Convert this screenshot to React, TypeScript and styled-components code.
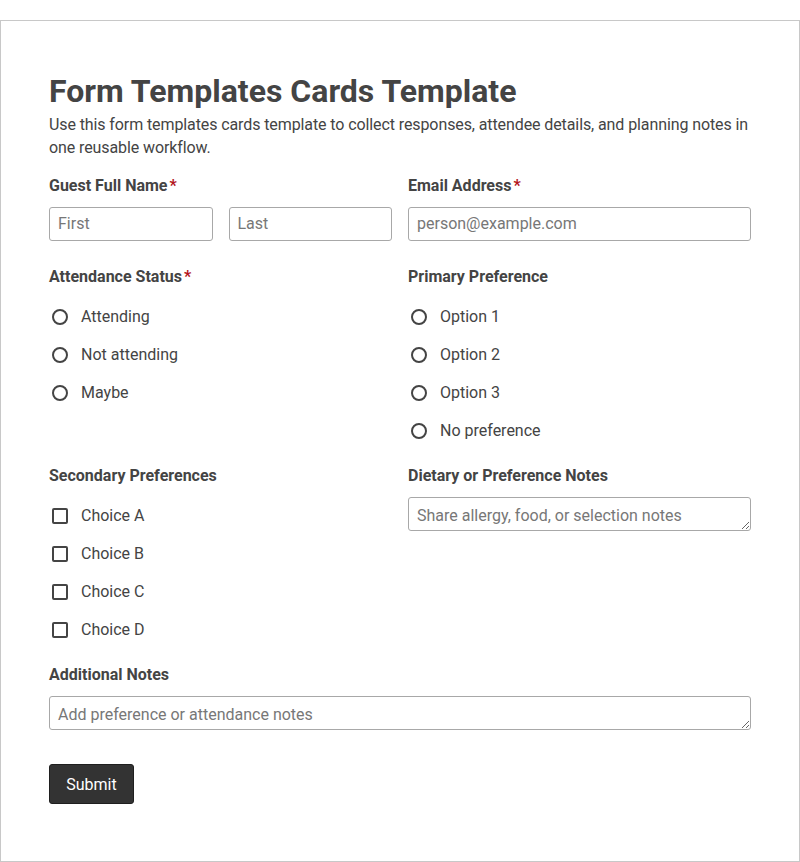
import React from "react";
import styled, { createGlobalStyle } from "styled-components";

const GlobalStyle = createGlobalStyle`
  html, body { margin: 0; padding: 0; background: #ffffff; }
  body { padding-top: 20px; font-family: Roboto, "Liberation Sans", Arial, sans-serif; color: #444444; }
  * { box-sizing: border-box; }
`;

const Card = styled.form`
  width: 800px;
  min-height: 842px;
  border: 1px solid #c8c8c8;
  padding: 50px 48px 48px 48px;
  background: #fff;
`;

const Title = styled.h1`
  margin: 0;
  font-size: 32px;
  line-height: 40px;
  font-weight: 700;
  color: #444444;
`;

const Intro = styled.p`
  margin: 2px 0 0;
  font-size: 16px;
  line-height: 23px;
  letter-spacing: -0.1px;
  color: #444444;
`;

const Grid = styled.div`
  margin-top: 17px;
  display: grid;
  grid-template-columns: 1fr 1fr;
  column-gap: 16px;
  row-gap: 24px;
`;

const Field = styled.div<{ $full?: boolean; $extra?: number }>`
  display: flex;
  flex-direction: column;
  grid-column: ${(p) => (p.$full ? "1 / -1" : "auto")};
  padding-bottom: ${(p) => p.$extra ?? 0}px;
`;

const Label = styled.div`
  font-size: 16px;
  line-height: 20px;
  font-weight: 700;
  color: #444444;
  margin-bottom: 11px;
`;

const Req = styled.span`
  color: #b3141c;
  margin-left: 2px;
`;

const Pair = styled.div`
  display: grid;
  grid-template-columns: 1fr 1fr;
  gap: 16px;
`;

const TextInput = styled.input`
  height: 34px;
  width: 100%;
  border: 1px solid #a8a8a8;
  border-radius: 3px;
  padding: 0 8px 2px;
  font-family: Roboto, "Liberation Sans", Arial, sans-serif;
  font-size: 16px;
  color: #444;
  background: #fff;
  &::placeholder { color: #777777; }
`;

const TextArea = styled.textarea`
  height: 34px;
  min-height: 34px;
  width: 100%;
  border: 1px solid #a8a8a8;
  border-radius: 3px;
  padding: 8px 8px 4px;
  font-family: Roboto, "Liberation Sans", Arial, sans-serif;
  font-size: 16px;
  line-height: 20px;
  color: #444;
  resize: vertical;
  display: block;
  &::placeholder { color: #777777; }
`;

const Options = styled.div`
  display: flex;
  flex-direction: column;
  gap: 16px;
  padding-top: 8px;
`;

const Option = styled.label`
  display: flex;
  align-items: center;
  gap: 10px;
  font-size: 16px;
  line-height: 22px;
  color: #444444;
`;

const Choice = styled.input<{ $round?: boolean }>`
  appearance: none;
  -webkit-appearance: none;
  width: 16px;
  height: 16px;
  margin: 0 3px;
  border: 2px solid #444444;
  border-radius: ${(p) => (p.$round ? "50%" : "2px")};
  background: #fff;
  flex: none;
`;

const SubmitButton = styled.button`
  margin-top: 34px;
  height: 40px;
  padding: 0 16px;
  min-width: 85px;
  background: #333333;
  color: #ffffff;
  border: 1px solid #1f1f1f;
  border-radius: 3px;
  font-family: Roboto, "Liberation Sans", Arial, sans-serif;
  font-size: 16px;
`;

const attendance = ["Attending", "Not attending", "Maybe"];
const primary = ["Option 1", "Option 2", "Option 3", "No preference"];
const secondary = ["Choice A", "Choice B", "Choice C", "Choice D"];

export default function App() {
  return (
    <>
      <GlobalStyle />
      <Card onSubmit={(e) => e.preventDefault()}>
        <Title>Form Templates Cards Template</Title>
        <Intro>
          Use this form templates cards template to collect responses, attendee details, and planning notes in one
          reusable workflow.
        </Intro>
        <Grid>
          <Field $extra={2}>
            <Label>
              Guest Full Name<Req>*</Req>
            </Label>
            <Pair>
              <TextInput placeholder="First" />
              <TextInput placeholder="Last" />
            </Pair>
          </Field>
          <Field $extra={2}>
            <Label>
              Email Address<Req>*</Req>
            </Label>
            <TextInput placeholder="person@example.com" />
          </Field>
          <Field>
            <Label>
              Attendance Status<Req>*</Req>
            </Label>
            <Options>
              {attendance.map((o) => (
                <Option key={o}>
                  <Choice type="radio" name="attendance" $round />
                  {o}
                </Option>
              ))}
            </Options>
          </Field>
          <Field>
            <Label>Primary Preference</Label>
            <Options>
              {primary.map((o) => (
                <Option key={o}>
                  <Choice type="radio" name="primary" $round />
                  {o}
                </Option>
              ))}
            </Options>
          </Field>
          <Field>
            <Label>Secondary Preferences</Label>
            <Options>
              {secondary.map((o) => (
                <Option key={o}>
                  <Choice type="checkbox" />
                  {o}
                </Option>
              ))}
            </Options>
          </Field>
          <Field>
            <Label>Dietary or Preference Notes</Label>
            <TextArea placeholder="Share allergy, food, or selection notes" />
          </Field>
          <Field $full>
            <Label>Additional Notes</Label>
            <TextArea placeholder="Add preference or attendance notes" />
          </Field>
        </Grid>
        <SubmitButton type="submit">Submit</SubmitButton>
      </Card>
    </>
  );
}
